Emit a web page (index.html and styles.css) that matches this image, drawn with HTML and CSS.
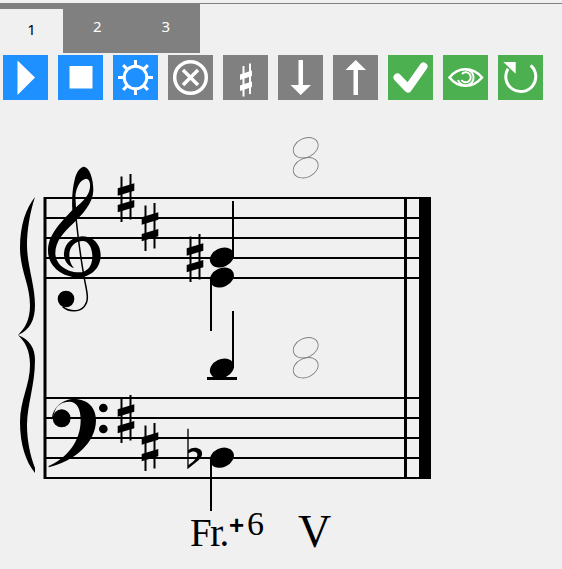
FILE: index.html
```html
<!DOCTYPE html>
<html lang="en">
<head>
  <meta charset="UTF-8" />
  <title>Harmony exercise</title>
  <link rel="stylesheet" href="styles.css">
</head>
<body>

  <div class="tabs">
    <div class="tab active">1</div>
    <div class="tab">2</div>
    <div class="tab">3</div>
  </div>

  <div class="toolbar">
    <button class="tool blue" title="Play">
      <svg viewBox="0 0 45 45"><path d="M14.5 5.500V40L32 22.500Z" fill="#fff"/></svg>
    </button>
    <button class="tool blue" title="Stop">
      <svg viewBox="0 0 45 45"><rect x="11.500" y="11" width="23" height="22.500" fill="#fff"/></svg>
    </button>
    <button class="tool blue" title="Settings">
      <svg viewBox="0 0 45 45" fill="none" stroke="#fff" stroke-width="3">
        <circle cx="22.500" cy="22.500" r="11.300"/>
        <path d="M22.500 5v6M22.500 34v6M5 22.500h6M34 22.500h6M10.100 10.100l4 4M30.900 30.900l4 4M10.100 34.900l4-4M30.900 14.100l4-4"/>
      </svg>
    </button>
    <button class="tool gray" title="Clear">
      <svg viewBox="0 0 45 45" fill="none" stroke="#fff" stroke-width="3.500">
        <circle cx="22.500" cy="22.500" r="15.800"/>
        <path d="M15 15l15 15M30 15l-15 15"/>
      </svg>
    </button>
    <button class="tool gray" title="Sharp">
      <svg viewBox="0 0 45 45" fill="#fff">
        <path d="M19.500 11h2v30.500h-2zM26 8.500h2v30.500h-2z"/>
        <path d="M17 19.500l12-4v5.500l-12 4zM17 30.500l12-4v5.500l-12 4z"/>
      </svg>
    </button>
    <button class="tool gray" title="Down">
      <svg viewBox="0 0 45 45"><path d="M20.500 5h4.500v25h8L22.700 40 12.500 30h8z" fill="#fff"/></svg>
    </button>
    <button class="tool gray" title="Up">
      <svg viewBox="0 0 45 45"><path d="M20.500 40h4.500V15h8L22.700 5 12.500 15h8z" fill="#fff"/></svg>
    </button>
    <button class="tool green" title="Check">
      <svg viewBox="0 0 45 45"><path d="M9.500 22.500L20 33.500 35.500 11.500" fill="none" stroke="#fff" stroke-width="8" stroke-linecap="round" stroke-linejoin="round"/></svg>
    </button>
    <button class="tool green" title="Show">
      <svg viewBox="0 0 45 45" fill="none" stroke="#fff">
        <path d="M6.500 22.500C15 11.500 30 11.500 39 22.500C30 33.500 15 33.500 6.500 22.500Z" stroke-width="2.500"/>
        <path d="M22.500 14.500a8 8 0 1 1-7.500 10.500" stroke-width="2"/>
        <path d="M19 19a5 5 0 1 1-.500 6" stroke-width="2"/>
      </svg>
    </button>
    <button class="tool green" title="Reload">
      <svg viewBox="0 0 45 45" fill="none" stroke="#fff" stroke-width="3">
        <path d="M32.700 10.300A15 15 0 1 1 10 13.700"/>
        <path d="M5.300 7h12.400v11.700z" fill="#fff" stroke="none"/>
      </svg>
    </button>
  </div>

  <svg class="score" viewBox="0 0 562 469" width="562" height="469">
    <defs>
      <g id="sharp">
        <path d="M-5.500 -21.500h2v45.500h-2zM3.500 -24h2v45.500h-2z"/>
        <path d="M-8.300 -9.700L8.300 -14.700V-7.300L-8.300 -2.300zM-8.300 7L8.300 2V9.300L-8.300 14.300z"/>
      </g>
      <ellipse id="head" rx="12.500" ry="9.500" transform="rotate(-25)"/>
      <ellipse id="ghost" rx="13" ry="9.500" transform="rotate(-25)" fill="none" stroke="#808080" stroke-width=".9"/>
    </defs>

    <!-- everything below is in page coords, shifted up by the 100px of the bars above -->
    <g transform="translate(0,-100)">
      <g class="lines">
        <path d="M44 198H419M44 218H419M44 238H419M44 258H419M44 278H419"/>
        <path d="M44 398H419M44 418H419M44 438H419M44 458H419M44 478H419"/>
      </g>
      <rect x="43.500" y="197" width="3" height="282"/>
      <rect x="404" y="197" width="3" height="282"/>
      <rect x="419" y="197" width="12" height="282"/>

      <!-- brace -->
      <path d="M35 197C26 208 20 225 20 248C20 270 30 285 30 305C30 320 25 328 18 335C25 342 30 350 30 365C30 385 20 400 20 422C20 445 26 462 35 473L35 468C30 455 27 440 27 425C27 405 35 385 35 360C35 348 30 340 18 335C30 330 35 320 35 305C35 285 27 265 27 245C27 230 30 212 35 197Z"/>

      <!-- treble clef, drawn at 3x from the top left of its box -->
      <g transform="translate(10,160) scale(.3333)">
        <path fill-rule="evenodd" d="M192 325C172 316 160 300 162 278C165 248 190 230 218 229C252 229 273 256 272 288C271 325 242 352 205 352C155 352 114 318 114 272C114 225 150 190 187 150C185 120 187 85 195 55C200 35 212 20 222 20C238 22 250 55 250 90C250 130 215 165 190 190C160 218 136 245 136 280C137 315 170 336 205 337C232 338 247 318 247 290C247 262 235 243 218 243C195 243 178 260 178 285C178 305 185 315 192 325ZM196 118C195 95 205 60 228 56C240 56 243 75 238 92C232 112 213 128 197 143Z"/>
        <path d="M192 90C195 150 205 250 222 350C230 395 240 420 222 440C205 458 175 455 158 440" fill="none" stroke="#000" stroke-width="4.500"/>
        <circle cx="168" cy="417" r="25"/>
      </g>

      <!-- bass clef -->
      <g transform="translate(10,320) scale(.3333)">
        <path d="M125 300C128 260 160 237 192 237C235 237 258 265 258 300C258 370 190 425 116 442L116 438C170 415 212 365 212 300C212 265 200 245 178 245C155 245 140 258 135 272Z"/>
        <circle cx="155" cy="295" r="27"/>
        <circle cx="280" cy="264" r="13"/>
        <circle cx="280" cy="327" r="13"/>
      </g>

      <use href="#sharp" x="126" y="198"/>
      <use href="#sharp" x="150" y="227"/>
      <use href="#sharp" x="126" y="419"/>
      <use href="#sharp" x="150" y="447"/>
      <use href="#sharp" x="195" y="258"/>

      <!-- flat -->
      <g transform="translate(170,420) scale(.3333)">
        <path d="M52 26h4V90C65 82 80 80 90 88C102 98 96 115 80 125L52 148ZM56 100V135C72 124 84 112 82 102C80 92 66 92 56 100Z" fill-rule="evenodd"/>
      </g>

      <!-- notes -->
      <use href="#head" x="221.900" y="257.500"/>
      <use href="#head" x="221.900" y="277.500"/>
      <use href="#head" x="221.900" y="368.500"/>
      <use href="#head" x="221.900" y="457.700"/>
      <rect x="232" y="201" width="2" height="56"/>
      <rect x="232" y="311" width="2" height="57"/>
      <rect x="210" y="278" width="2" height="53"/>
      <rect x="210" y="458" width="2" height="53"/>
      <rect x="207" y="377" width="30" height="3"/>

      <!-- ghost answer notes -->
      <use href="#ghost" x="305.700" y="147.700"/>
      <use href="#ghost" x="305.700" y="167.700"/>
      <use href="#ghost" x="305.700" y="347.700"/>
      <use href="#ghost" x="305.700" y="367.700"/>

      <text class="chord" x="190" y="546">Fr.</text>
      <text class="chord-plus" x="229" y="534">+</text>
      <text class="chord-six" x="247" y="535">6</text>
      <text class="chord-v" x="298" y="547">V</text>
    </g>
  </svg>

</body>
</html>
```

FILE: styles.css
```css
* {
  box-sizing: border-box;
}
body, html {
  margin: 0;
  padding: 0;
  background-color: #f0f0f0;
  font-family: "Noto Sans", sans-serif;
  overflow: hidden;
}

.tabs {
  display: flex;
  height: 50px;
  margin-top: 3px;
  border-top: 1px solid #808080;
}

.tab {
  width: 68.500px;
  padding-top: 12px;
  background-color: #808080;
  color: #fff;
  font-size: 15px;
  text-align: center;
}

.tab.active {
  width: 63px;
  padding-top: 10px;
  border-top: 5px solid #808080;
  background-color: #f0f0f0;
  color: #000;
}

.toolbar {
  display: flex;
  gap: 10px;
  padding: 0 3px;
  margin-top: 2px;
}

.tool {
  width: 45px;
  height: 45px;
  padding: 0;
  border: none;
}

.tool svg {
  display: block;
  width: 45px;
  height: 45px;
}

.blue { background-color: #1e90ff; }
.gray { background-color: #808080; }
.green { background-color: #4caf50; }

.score {
  display: block;
}

.lines path {
  fill: none;
  stroke: #000;
  stroke-width: 2;
}

.chord, .chord-six, .chord-v {
  font-family: "Liberation Serif", serif;
}

.chord {
  font-size: 39px;
  letter-spacing: -1.500px;
}

.chord-plus {
  font-family: "Liberation Sans", sans-serif;
  font-size: 26px;
  font-weight: bold;
}

.chord-six {
  font-size: 34px;
}

.chord-v {
  font-size: 46px;
}
```
